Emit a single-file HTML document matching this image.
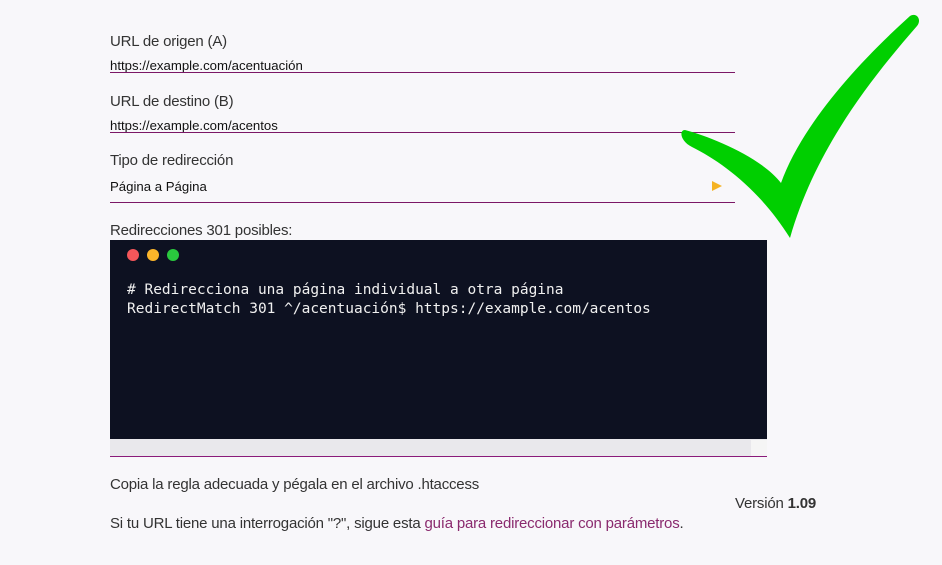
<!DOCTYPE html>
<html><head><meta charset="utf-8"><style>
body{margin:0;width:942px;height:565px;background:#f8f7fa;font-family:"Liberation Sans",sans-serif;color:#222;position:relative;overflow:hidden}
.a{position:absolute}
.lbl{font-size:15px;color:#333;letter-spacing:-0.2px}
.val{font-size:13.2px;color:#111}
.line{height:1px;background:#7b1766;left:110px;width:625px}
.mono{font-family:"DejaVu Sans Mono","Liberation Mono",monospace;font-size:14.5px;color:#f0f0f0;white-space:pre;font-weight:500}
</style></head><body>
<div class="a lbl" style="left:110px;top:33px">URL de origen (A)</div>
<div class="a val" style="left:110px;top:58px">https://example.com/acentuación</div>
<div class="a line" style="top:72px"></div>
<div class="a lbl" style="left:110px;top:93px">URL de destino (B)</div>
<div class="a val" style="left:110px;top:118px">https://example.com/acentos</div>
<div class="a line" style="top:132px"></div>
<div class="a lbl" style="left:110px;top:152px">Tipo de redirección</div>
<div class="a val" style="left:110px;top:179px">Página a Página</div>
<div class="a" style="left:712px;top:181px;width:0;height:0;border-left:10px solid #f5b324;border-top:5px solid transparent;border-bottom:5px solid transparent"></div>
<div class="a line" style="top:202px"></div>
<div class="a lbl" style="left:110px;top:222px">Redirecciones 301 posibles:</div>
<div class="a" style="left:110px;top:240px;width:657px;height:199px;background:#0d1121"></div>
<div class="a" style="left:127px;top:249px;width:12px;height:12px;border-radius:50%;background:#f4565a"></div>
<div class="a" style="left:147px;top:249px;width:12px;height:12px;border-radius:50%;background:#fbb52a"></div>
<div class="a" style="left:167px;top:249px;width:12px;height:12px;border-radius:50%;background:#2ac83e"></div>
<div class="a mono" style="left:127px;top:281px;line-height:19px"># Redirecciona una página individual a otra página
RedirectMatch 301 ^/acentuación$ https://example.com/acentos</div>
<div class="a" style="left:110px;top:439px;width:657px;height:17px;background:#e9e8ec"></div>
<div class="a" style="left:751px;top:440px;width:16px;height:16px;background:#f5f5f5"></div>
<div class="a" style="left:110px;top:456px;width:657px;height:1px;background:#8a1a7a"></div>
<div class="a lbl" style="left:110px;top:476px">Copia la regla adecuada y pégala en el archivo .htaccess</div>
<div class="a lbl" style="left:735px;top:495px">Versión <b>1.09</b></div>
<div class="a lbl" style="left:110px;top:515px">Si tu URL tiene una interrogación "?", sigue esta <span style="color:#8a2a6e">guía para redireccionar con parámetros</span>.</div>
<svg class="a" style="left:0;top:0" width="942" height="565"><path d="M685,130 C712,137 762,158 781,183 C800,130 850,70 910,16 C917,12 922,20 917,26 C870,80 815,150 790,238 C760,190 722,162 692,147 C680,141 679,130 685,130 Z" fill="#00cf00"/></svg>
</body></html>
